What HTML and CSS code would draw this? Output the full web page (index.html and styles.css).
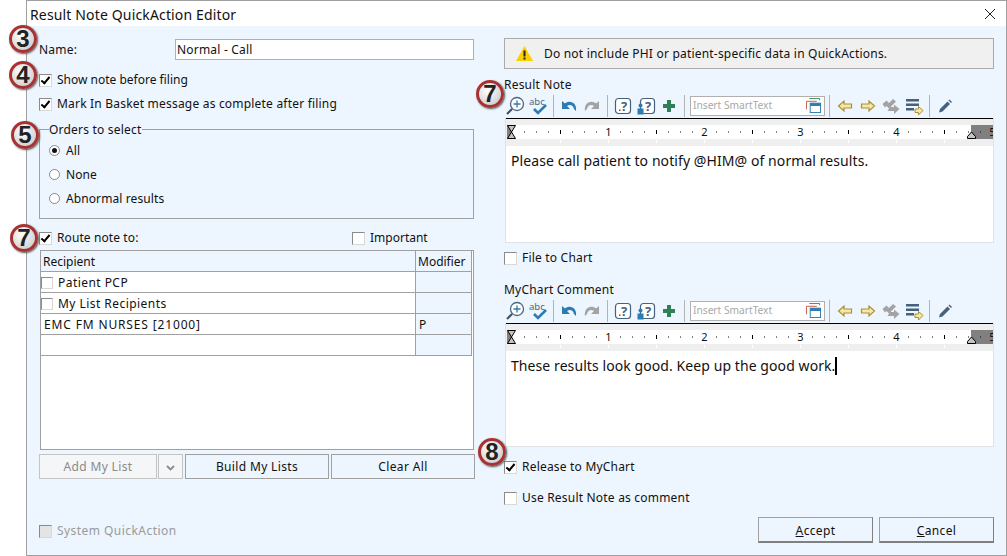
FILE: index.html
```html
<!DOCTYPE html>
<html lang="en">

<head>
  <meta charset="UTF-8">
  <title>Result Note QuickAction Editor</title>
  <link rel="stylesheet" href="styles.css">
</head>

<body>
  <svg class="icon-defs" xmlns="http://www.w3.org/2000/svg">
    <symbol id="i-zoom" viewBox="0 0 20 20">
      <circle cx="12" cy="8" r="6.5" fill="#fff" stroke="#50667c" stroke-width="1.3"/>
      <path d="M12 4.5v7M8.5 8h7" stroke="#2b7cb0" stroke-width="1.3"/>
      <path d="M7 13l-5 5" stroke="#3c5268" stroke-width="2.2"/>
    </symbol>
    <symbol id="i-spell" viewBox="0 0 20 20">
      <text x="1" y="9" class="icon-abc">abc</text>
      <path d="M6 13l4 4 8-8" fill="none" stroke="#2b7cb0" stroke-width="2.6"/>
    </symbol>
    <symbol id="i-undo" viewBox="0 0 20 20">
      <path d="M3 5l0 8 8 0-3-3c3-2 6-1 7 3l2 2c1-6-3-10-8-9-1.500 .3-2.500 1-3 1.500z" fill="#2b7cb0"/>
    </symbol>
    <symbol id="i-redo" viewBox="0 0 20 20">
      <path d="M17 5l0 8-8 0 3-3c-3-2-6-1-7 3l-2 2c-1-6 3-10 8-9 1.500 .3 2.500 1 3 1.500z" fill="#a3a3a3"/>
    </symbol>
    <symbol id="i-help" viewBox="0 0 20 20">
      <rect x="2.500" y="2.500" width="15" height="15" rx="3" fill="#fff" stroke="#46617c" stroke-width="1.200"/>
      <text x="11" y="15" class="icon-q">?</text>
      <path d="M6 13.500h1.500v1.500H6z" fill="#46617c"/>
    </symbol>
    <symbol id="i-help-user" viewBox="0 0 20 20">
      <rect x="4.500" y="2.500" width="14" height="15" rx="3" fill="#fff" stroke="#46617c" stroke-width="1.200"/>
      <text x="12" y="15" class="icon-q">?</text>
      <circle cx="4.500" cy="9.500" r="2" fill="#2b7cb0"/>
      <path d="M1.500 12.500h6v6h-6z" fill="#2b7cb0"/>
    </symbol>
    <symbol id="i-plus" viewBox="0 0 20 20">
      <path d="M8 4h4v4h4v4h-4v4H8v-4H4V8h4z" fill="#2f8057"/>
    </symbol>
    <symbol id="i-left" viewBox="0 0 20 20">
      <path d="M3.500 10L9 5v3h7.500v4H9v3z" fill="#f5e8a6" stroke="#a8923a" stroke-width="1.200"/>
    </symbol>
    <symbol id="i-right" viewBox="0 0 20 20">
      <path d="M16.500 10L11 5v3H3.500v4H11v3z" fill="#f5e8a6" stroke="#a8923a" stroke-width="1.200"/>
    </symbol>
    <symbol id="i-swap" viewBox="0 0 20 20">
      <path d="M1.500 8l4-3.500 2.500 2.500 4-4 3 2.500-7 7-2.500-2.500-1.500 1.500z" fill="#a3a3a3"/>
      <path d="M18.500 13L13 8.500v2.500H9l-2.500 4H13v3z" fill="#a3a3a3"/>
    </symbol>
    <symbol id="i-list" viewBox="0 0 20 20">
      <path d="M2 3h13v2.500H2zM2 7.500h13V10H2zM2 12h8v2.500H2z" fill="#46617c"/>
      <path d="M19 14.500L14.500 10.500v2.500H11v3.500h3.500v2.500z" fill="#f5e8a6" stroke="#a8923a"/>
    </symbol>
    <symbol id="i-pencil" viewBox="0 0 20 20">
      <path d="M5 13l7.500-7.500 2.500 2.500L7.500 15.500 4 16.500z" fill="#46617c"/>
      <path d="M13.500 4.500l1-1 2.500 2.500-1 1z" fill="#46617c"/>
    </symbol>
    <symbol id="i-insert" viewBox="0 0 16 16">
      <path d="M3.500 .5h11v2" fill="none" stroke="#3d8a5f"/>
      <path d="M.5 12V3.500h11" fill="none" stroke="#c9553d"/>
      <rect x="4.500" y="5.500" width="11" height="10" fill="#fff" stroke="#2b7cb0"/>
      <rect x="4.500" y="5.500" width="11" height="3" fill="#2b7cb0"/>
    </symbol>
    <symbol id="i-ruler" viewBox="0 0 487 28">
      <rect x="0" y="1" width="487" height="27" fill="#efefef"/>
      <rect x="1" y="7" width="486" height="14" fill="#fff"/>
      <rect x="1" y="7" width="5" height="14" fill="#808080"/>
      <rect x="465" y="7" width="22" height="14" fill="#808080"/>
      <rect x="0" y="0" width="487" height="1" fill="#000"/>
      <path d="M18 14h1M30 14h1M42 14h1M66 14h1M78 14h1M90 14h1M114 14h1M126 14h1M138 14h1M162 14h1M174 14h1M186 14h1M210 14h1M222 14h1M234 14h1M258 14h1M270 14h1M282 14h1M306 14h1M318 14h1M330 14h1M354 14h1M366 14h1M378 14h1M402 14h1M414 14h1M426 14h1M450 14h1M462 14h1M474 14h1" stroke="#000"/>
      <path d="M54.500 12v4M150.500 12v4M246.500 12v4M342.500 12v4M438.500 12v4" stroke="#000"/>
      <path d="M54.500 22v3M102.500 22v3M150.500 22v3M198.500 22v3M246.500 22v3M294.500 22v3M342.500 22v3M390.500 22v3M438.500 22v3" stroke="#fff"/>
      <text x="102.500" y="18" class="ruler-num">1</text>
      <text x="198.500" y="18" class="ruler-num">2</text>
      <text x="294.500" y="18" class="ruler-num">3</text>
      <text x="390.500" y="18" class="ruler-num">4</text>
      <text x="486.500" y="18" class="ruler-num">5</text>
      <path d="M1.500 7.500h8L5.500 14l4 6.500h-8L5.500 14z" fill="#c4c4c4" stroke="#000"/>
      <path d="M461.500 20.500h8v-2L465.500 14l-4 4.500z" fill="#c4c4c4" stroke="#000"/>
    </symbol>
  </svg>

  <div class="window">
    <div class="title-bar">
      <span class="title-text">Result Note QuickAction Editor</span>
      <svg class="close-x" width="10" height="10" viewBox="0 0 10 10">
        <path d="M0 0l10 10M10 0L0 10" stroke="#222" stroke-width="1"/>
      </svg>
    </div>

    <div class="dialog-body">
      <section class="col-left">
        <div class="name-row">
          <label class="name-label">Name:</label>
          <div class="text-field">Normal - Call</div>
        </div>
        <div class="check-row row-show"><span class="box checked"></span>Show note before filing</div>
        <div class="check-row row-mark"><span class="box checked"></span>Mark In Basket message as complete after filing</div>

        <div class="group">
          <div class="group-title">Orders to select</div>
          <div class="radio-row"><span class="radio on"></span>All</div>
          <div class="radio-row"><span class="radio"></span>None</div>
          <div class="radio-row"><span class="radio"></span>Abnormal results</div>
        </div>

        <div class="route-row">
          <div class="check-row"><span class="box checked"></span>Route note to:</div>
          <div class="check-row important"><span class="box"></span>Important</div>
        </div>

        <div class="recipients">
          <table class="recipient-table">
            <tr class="head">
              <td class="col-name">Recipient</td>
              <td class="col-mod">Modifier</td>
            </tr>
            <tr>
              <td class="col-name col-check"><span class="box"></span>Patient PCP</td>
              <td class="col-mod"></td>
            </tr>
            <tr>
              <td class="col-name col-check"><span class="box"></span>My List Recipients</td>
              <td class="col-mod"></td>
            </tr>
            <tr>
              <td class="col-name entry">EMC FM NURSES [21000]</td>
              <td class="col-mod entry">P</td>
            </tr>
            <tr>
              <td class="col-name"></td>
              <td class="col-mod"></td>
            </tr>
          </table>
        </div>

        <div class="list-buttons">
          <button class="btn btn-add" disabled>Add My List</button>
          <button class="btn btn-drop" disabled>
            <svg width="9" height="6" viewBox="0 0 9 6"><path d="M1 1l3.500 3.500L8 1" fill="none" stroke="#8a8a8a" stroke-width="1.800"/></svg>
          </button>
          <button class="btn btn-list">Build My Lists</button>
          <button class="btn btn-list">Clear All</button>
        </div>

        <div class="check-row system"><span class="box disabled"></span>System QuickAction</div>
      </section>

      <section class="col-right">
        <div class="warning">
          <svg width="17" height="15" viewBox="0 0 17 15">
            <path d="M8.500 0L17 15H0z" fill="#fbd000"/>
            <path d="M7.500 4.500h2v6h-2zM7.500 11.500h2v2h-2z" fill="#222"/>
          </svg>
          <span>Do not include PHI or patient-specific data in QuickActions.</span>
        </div>

        <div class="field-label">Result Note</div>
        <div class="toolbar">
          <div class="tb-group first">
            <svg class="tb-icon"><use href="#i-zoom"/></svg>
            <svg class="tb-icon"><use href="#i-spell"/></svg>
          </div>
          <span class="tb-sep"></span>
          <div class="tb-group">
            <svg class="tb-icon"><use href="#i-undo"/></svg>
            <svg class="tb-icon"><use href="#i-redo"/></svg>
          </div>
          <span class="tb-sep"></span>
          <div class="tb-group">
            <svg class="tb-icon"><use href="#i-help"/></svg>
            <svg class="tb-icon"><use href="#i-help-user"/></svg>
            <svg class="tb-icon"><use href="#i-plus"/></svg>
          </div>
          <span class="tb-sep"></span>
          <div class="smart-text">
            <span>Insert SmartText</span>
            <svg width="15" height="15"><use href="#i-insert"/></svg>
          </div>
          <span class="tb-sep"></span>
          <div class="tb-group">
            <svg class="tb-icon"><use href="#i-left"/></svg>
            <svg class="tb-icon"><use href="#i-right"/></svg>
            <svg class="tb-icon"><use href="#i-swap"/></svg>
            <svg class="tb-icon"><use href="#i-list"/></svg>
          </div>
          <span class="tb-sep"></span>
          <div class="tb-group">
            <svg class="tb-icon"><use href="#i-pencil"/></svg>
          </div>
        </div>
        <div class="editor editor-note">
          <svg class="ruler"><use href="#i-ruler"/></svg>
          <p class="editor-text">Please call patient to notify @HIM@ of normal results.</p>
        </div>

        <div class="check-row row-file"><span class="box"></span>File to Chart</div>

        <div class="field-label label-comment">MyChart Comment</div>
        <div class="toolbar">
          <div class="tb-group first">
            <svg class="tb-icon"><use href="#i-zoom"/></svg>
            <svg class="tb-icon"><use href="#i-spell"/></svg>
          </div>
          <span class="tb-sep"></span>
          <div class="tb-group">
            <svg class="tb-icon"><use href="#i-undo"/></svg>
            <svg class="tb-icon"><use href="#i-redo"/></svg>
          </div>
          <span class="tb-sep"></span>
          <div class="tb-group">
            <svg class="tb-icon"><use href="#i-help"/></svg>
            <svg class="tb-icon"><use href="#i-help-user"/></svg>
            <svg class="tb-icon"><use href="#i-plus"/></svg>
          </div>
          <span class="tb-sep"></span>
          <div class="smart-text">
            <span>Insert SmartText</span>
            <svg width="15" height="15"><use href="#i-insert"/></svg>
          </div>
          <span class="tb-sep"></span>
          <div class="tb-group">
            <svg class="tb-icon"><use href="#i-left"/></svg>
            <svg class="tb-icon"><use href="#i-right"/></svg>
            <svg class="tb-icon"><use href="#i-swap"/></svg>
            <svg class="tb-icon"><use href="#i-list"/></svg>
          </div>
          <span class="tb-sep"></span>
          <div class="tb-group">
            <svg class="tb-icon"><use href="#i-pencil"/></svg>
          </div>
        </div>
        <div class="editor editor-comment">
          <svg class="ruler"><use href="#i-ruler"/></svg>
          <p class="editor-text">These results look good. Keep up the good work.<span class="caret"></span></p>
        </div>

        <div class="check-row row-release"><span class="box checked"></span>Release to MyChart</div>
        <div class="check-row row-use"><span class="box"></span>Use Result Note as comment</div>

        <div class="action-buttons">
          <button class="btn btn-action"><u>A</u>ccept</button>
          <button class="btn btn-action"><u>C</u>ancel</button>
        </div>
      </section>
    </div>
  </div>

  <!-- numbered callouts that sit on top of the dialog -->
  <span class="badge badge-3">3</span>
  <span class="badge badge-4">4</span>
  <span class="badge badge-5">5</span>
  <span class="badge badge-7a">7</span>
  <span class="badge badge-7b">7</span>
  <span class="badge badge-8">8</span>
</body>

</html>
```

FILE: styles.css
```css
html,
body {
  margin: 0;
  padding: 0;
  height: 556px;
  overflow: hidden;
  background-color: #fff;
}

body {
  font-family: "Noto Sans", "Liberation Sans", sans-serif;
  font-size: 12px;
  letter-spacing: 0.2px;
  color: #111;
}

.icon-defs {
  display: none;
}

.window {
  box-sizing: border-box;
  width: 981px;
  height: 556px;
  margin-left: 26px;
  border: 1px solid #a0a0a0;
  background-color: #edf5fe;
}

.title-bar {
  box-sizing: border-box;
  display: flex;
  align-items: center;
  justify-content: space-between;
  height: 25px;
  padding: 1px 11px 0 3px;
  background-color: #fff;
}

.title-text {
  font-size: 14px;
  letter-spacing: 0.15px;
}

.dialog-body {
  display: flex;
  padding: 12px 0 0 12px;
}

.col-left {
  width: 435px;
  padding-top: 1px;
}

.col-right {
  width: 490px;
  margin-left: 30px;
}

/* left column */
.name-row {
  display: flex;
  align-items: center;
  height: 21px;
}

.name-label {
  width: 136px;
}

.text-field {
  box-sizing: border-box;
  width: 299px;
  height: 21px;
  line-height: 20px;
  padding: 0 0 0 1px;
  border: 1px solid #b0b0b0;
  background-color: #fff;
}

.check-row {
  display: flex;
  align-items: center;
  height: 16px;
  line-height: 16px;
}

.box {
  box-sizing: border-box;
  position: relative;
  display: inline-block;
  flex: none;
  width: 13px;
  height: 13px;
  margin-right: 5px;
  border: 1px solid #8a8a8a;
  border-right-color: #d8d8d8;
  border-bottom-color: #d8d8d8;
  background-color: #fff;
}

.box.checked::after {
  content: "";
  position: absolute;
  left: 3px;
  top: 0;
  width: 3px;
  height: 7px;
  border: solid #000;
  border-width: 0 2px 2px 0;
  transform: rotate(40deg);
}

.box.disabled {
  background-color: #e4e4e4;
}

.row-show {
  margin-top: 12px;
  letter-spacing: 0;
}

.row-mark {
  margin-top: 8px;
}

.group {
  box-sizing: border-box;
  width: 435px;
  height: 90px;
  margin-top: 17px;
  padding-left: 9px;
  border: 1px solid #a0a0a0;
}

.group-title {
  width: fit-content;
  height: 16px;
  line-height: 16px;
  margin-top: -8px;
  margin-bottom: 4px;
  padding-right: 1px;
  background-color: #edf5fe;
}

.radio-row {
  display: flex;
  align-items: center;
  height: 16px;
  margin-bottom: 8px;
  letter-spacing: 0.1px;
}

.radio {
  box-sizing: border-box;
  position: relative;
  width: 11px;
  height: 11px;
  margin-right: 6px;
  border: 1px solid #8a8a8a;
  border-radius: 50%;
  background-color: #fff;
}

.radio.on::after {
  content: "";
  position: absolute;
  left: 2px;
  top: 2px;
  width: 5px;
  height: 5px;
  border-radius: 50%;
  background-color: #111;
}

.route-row {
  display: flex;
  justify-content: space-between;
  margin-top: 11px;
  letter-spacing: 0.1px;
}

.important {
  width: 122px;
  letter-spacing: 0;
}

.recipients {
  box-sizing: border-box;
  width: 434px;
  height: 200px;
  margin: 4px 0 0 1px;
  border: 1px solid #a0a0a0;
  background-color: #fff;
}

.recipient-table {
  width: 431px;
  border-collapse: separate;
  border-spacing: 0;
  table-layout: fixed;
  letter-spacing: 0;
}

.recipient-table td {
  box-sizing: border-box;
  height: 21px;
  padding: 0 2px;
  border-right: 1px solid #a0a0a0;
  border-bottom: 1px solid #a0a0a0;
}

.recipient-table .box {
  width: 12px;
  height: 12px;
  vertical-align: -2px;
}

.recipient-table .col-name {
  width: 375px;
}

.recipient-table .col-mod {
  background-color: #edf5fe;
}

.recipient-table .head .col-name {
  background-color: #edf5fe;
}

.recipient-table .col-check {
  padding-left: 0;
  letter-spacing: 0.45px;
}

.recipient-table .entry {
  padding-left: 3px;
  letter-spacing: 0.85px;
}

.recipient-table .col-mod.entry {
  letter-spacing: 0;
}

.btn {
  box-sizing: border-box;
  flex: none;
  height: 25px;
  padding: 0;
  border: 1px solid #a0a0a0;
  background-color: #edf5fe;
  font-family: inherit;
  font-size: 12px;
  letter-spacing: 0.35px;
  color: #111;
}

.btn:disabled {
  border-color: #c4c4c4;
  background-color: #f4f6f8;
  color: #8a8a8a;
}

.list-buttons {
  display: flex;
  margin-top: 4px;
}

.btn-add {
  width: 118px;
}

.btn-drop {
  width: 25px;
  margin-left: 1px;
  margin-right: 2px;
}

.btn-list {
  width: 144px;
  margin-right: 2px;
}

.system {
  margin-top: 44px;
  letter-spacing: 0.45px;
  color: #9a9a9a;
}

/* right column */
.warning {
  box-sizing: border-box;
  display: flex;
  align-items: center;
  gap: 11px;
  height: 31px;
  padding-left: 11px;
  border: 1px solid #aaa;
  background-color: #f0f0f0;
}

.field-label {
  height: 16px;
  line-height: 16px;
  margin-top: 8px;
}

.label-comment {
  margin-top: 16px;
}

.toolbar {
  display: flex;
  align-items: center;
  height: 23px;
  margin-top: 1px;
}

.tb-group {
  display: flex;
  gap: 3px;
  margin: 0 5px;
}

.tb-group.first {
  margin-left: 1px;
}

.tb-icon {
  width: 20px;
  height: 20px;
}

.tb-sep {
  flex: none;
  width: 1px;
  height: 22px;
  background-color: #b4b4b4;
}

.icon-abc {
  font-size: 9.5px;
  letter-spacing: 0;
  fill: #50667c;
}

.icon-q {
  font-size: 13px;
  font-weight: bold;
  letter-spacing: 0;
  text-anchor: middle;
  fill: #46617c;
}

.ruler-num {
  font-size: 11px;
  letter-spacing: 0;
  text-anchor: middle;
  fill: #111;
}

.smart-text {
  box-sizing: border-box;
  display: flex;
  align-items: center;
  justify-content: space-between;
  width: 135px;
  height: 20px;
  margin: 0 4px 0 5px;
  padding: 0 3px 1px 2px;
  border: 1px solid #b0b0b0;
  background-color: #fff;
  font-size: 10.2px;
  letter-spacing: 0;
  color: #a8a8a8;
}

.editor {
  box-sizing: border-box;
  width: 489px;
  margin: 1px 0 0 1px;
  border: 1px solid #dfe3e8;
  border-top: none;
  background-color: #fff;
}

.editor-note {
  height: 125px;
}

.editor-comment {
  height: 124px;
}

.ruler {
  display: block;
  width: 487px;
  height: 28px;
}

.editor-text {
  margin: 5px 0 0 5px;
  font-size: 14px;
  line-height: 20px;
  letter-spacing: 0.08px;
}

.caret {
  display: inline-block;
  width: 2px;
  height: 18px;
  vertical-align: -4px;
  background-color: #000;
}

.row-file {
  margin-top: 7px;
}

.row-release {
  margin-top: 12px;
}

.row-use {
  margin-top: 15px;
}

.action-buttons {
  display: flex;
  justify-content: flex-end;
  gap: 6px;
  margin-top: 11px;
}

.btn-action {
  width: 115px;
  height: 26px;
  padding-top: 1px;
  border-right-color: #808080;
  border-bottom: 2px solid #808080;
}

/* callouts */
.badge {
  box-sizing: border-box;
  position: absolute;
  width: 28px;
  height: 28px;
  line-height: 22px;
  text-align: center;
  border: 3px solid #a83232;
  border-radius: 50%;
  background: radial-gradient(circle at 40% 35%, #fff, #cfcfcf 80%);
  box-shadow: 1px 1px 2px #555;
  font-family: "Liberation Sans", sans-serif;
  font-size: 24px;
  font-weight: bold;
  letter-spacing: 0;
  color: #222;
}

.badge-3 { left: 9px; top: 25px; }
.badge-4 { left: 9px; top: 61px; }
.badge-5 { left: 11px; top: 121px; }
.badge-7a { left: 10px; top: 224px; }
.badge-7b { left: 476px; top: 80px; }
.badge-8 { left: 478px; top: 438px; }

.close-x {
  display: block;
}
```
